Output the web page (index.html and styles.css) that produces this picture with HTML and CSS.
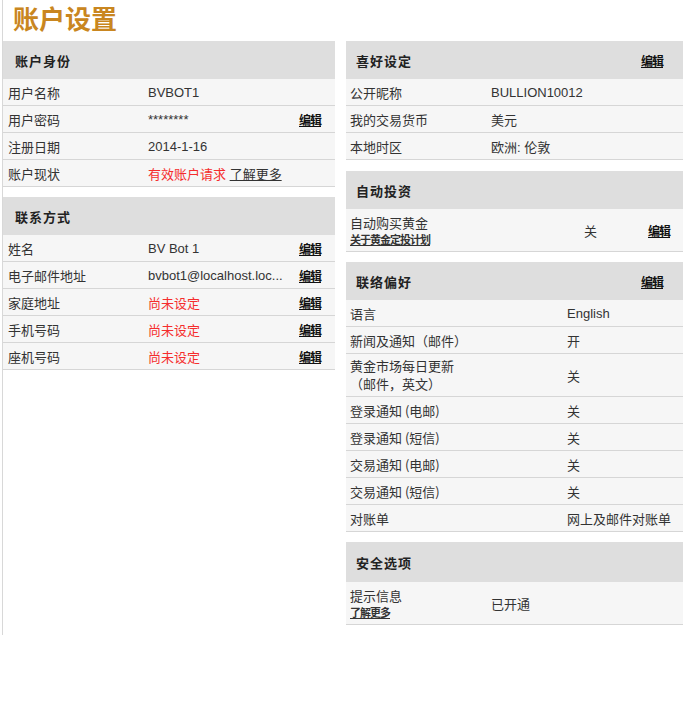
FILE: index.html
```html
<!DOCTYPE html>
<html lang="zh-CN">
<head>
    <meta charset="UTF-8">
    <title>账户设置</title>
    <link rel="stylesheet" href="styles.css">
</head>
<body>
    <div class="page">
        <h1 class="page-title">账户设置</h1>

        <div class="columns">
            <!-- left column -->
            <div class="col col-left">
                <div class="panel">
                    <div class="panel-head"><span>账户身份</span></div>
                    <div class="row">
                        <span class="label">用户名称</span>
                        <span class="value">BVBOT1</span>
                        <span class="edit"></span>
                    </div>
                    <div class="row">
                        <span class="label">用户密码</span>
                        <span class="value">********</span>
                        <a class="edit" href="#">编辑</a>
                    </div>
                    <div class="row">
                        <span class="label">注册日期</span>
                        <span class="value">2014-1-16</span>
                        <span class="edit"></span>
                    </div>
                    <div class="row">
                        <span class="label">账户现状</span>
                        <span class="value"><span class="red">有效账户请求</span> <a class="more" href="#">了解更多</a></span>
                        <span class="edit"></span>
                    </div>
                </div>

                <div class="panel">
                    <div class="panel-head"><span>联系方式</span></div>
                    <div class="row">
                        <span class="label">姓名</span>
                        <span class="value">BV Bot 1</span>
                        <a class="edit" href="#">编辑</a>
                    </div>
                    <div class="row">
                        <span class="label">电子邮件地址</span>
                        <span class="value" title="bvbot1@localhost.localdomain">bvbot1@localhost.loc...</span>
                        <a class="edit" href="#">编辑</a>
                    </div>
                    <div class="row">
                        <span class="label">家庭地址</span>
                        <span class="value red">尚未设定</span>
                        <a class="edit" href="#">编辑</a>
                    </div>
                    <div class="row">
                        <span class="label">手机号码</span>
                        <span class="value red">尚未设定</span>
                        <a class="edit" href="#">编辑</a>
                    </div>
                    <div class="row">
                        <span class="label">座机号码</span>
                        <span class="value red">尚未设定</span>
                        <a class="edit" href="#">编辑</a>
                    </div>
                </div>
            </div>

            <!-- right column -->
            <div class="col col-right">
                <div class="panel">
                    <div class="panel-head"><span>喜好设定</span><a class="edit" href="#">编辑</a></div>
                    <div class="row">
                        <span class="label">公开昵称</span>
                        <span class="value">BULLION10012</span>
                    </div>
                    <div class="row">
                        <span class="label">我的交易货币</span>
                        <span class="value">美元</span>
                    </div>
                    <div class="row">
                        <span class="label">本地时区</span>
                        <span class="value">欧洲: 伦敦</span>
                    </div>
                </div>

                <div class="panel">
                    <div class="panel-head"><span>自动投资</span></div>
                    <div class="row row-tall invest">
                        <span class="label">自动购买黄金<a class="small-link" href="#">关于黄金定投计划</a></span>
                        <span class="value">关</span>
                        <a class="edit" href="#">编辑</a>
                    </div>
                </div>

                <div class="panel prefs">
                    <div class="panel-head"><span>联络偏好</span><a class="edit" href="#">编辑</a></div>
                    <div class="row"><span class="label">语言</span><span class="value">English</span></div>
                    <div class="row"><span class="label">新闻及通知（邮件）</span><span class="value">开</span></div>
                    <div class="row row-tall"><span class="label">黄金市场每日更新<br>（邮件，英文）</span><span class="value">关</span></div>
                    <div class="row"><span class="label">登录通知 (电邮)</span><span class="value">关</span></div>
                    <div class="row"><span class="label">登录通知 (短信)</span><span class="value">关</span></div>
                    <div class="row"><span class="label">交易通知 (电邮)</span><span class="value">关</span></div>
                    <div class="row"><span class="label">交易通知 (短信)</span><span class="value">关</span></div>
                    <div class="row"><span class="label">对账单</span><span class="value">网上及邮件对账单</span></div>
                </div>

                <div class="panel">
                    <div class="panel-head tall-head"><span>安全选项</span></div>
                    <div class="row row-tall">
                        <span class="label">提示信息<a class="small-link" href="#">了解更多</a></span>
                        <span class="value">已开通</span>
                    </div>
                </div>
            </div>
        </div>
    </div>
</body>
</html>
```

FILE: styles.css
```css
body {
    margin: 0;
    background: #fff;
    color: #333;
    font-family: "Liberation Sans", Arial, "Noto Sans CJK SC", sans-serif;
    font-size: 13px;
}

a {
    color: #222;
}

.page {
    margin-left: 2px;
    width: 681px;
    border-left: 1px solid #d8d8d8;
    padding-bottom: 10px;
}

.page-title {
    margin: 0;
    height: 41px;
    padding-left: 10px;
    font-size: 26px;
    line-height: 36px;
    font-weight: bold;
    color: #c98620;
    font-family: "Noto Sans CJK SC", sans-serif;
}

.columns {
    display: flex;
    gap: 11px;
    align-items: flex-start;
}

.col-left {
    width: 332px;
}

.col-right {
    flex: 1;
}

.panel {
    margin-bottom: 10px;
}

.col-right .panel:first-child {
    margin-bottom: 11px;
}

.panel:last-child {
    margin-bottom: 0;
}

.panel-head {
    height: 38px;
    display: flex;
    align-items: center;
    justify-content: space-between;
    padding: 0 21px 0 10px;
    background: #dedede;
    font-family: "Noto Sans CJK SC", sans-serif;
    font-weight: bold;
    font-size: 13px;
    color: #222;
    letter-spacing: 1px;
}

.tall-head {
    height: 40px;
}

.col-left .panel-head {
    padding-left: 12px;
}

.row {
    display: grid;
    grid-template-columns: 145px 1fr 36px;
    align-items: center;
    height: 26px;
    background: #f6f6f6;
    border-bottom: 1px solid #d6d6d6;
}

.col-right .row {
    grid-template-columns: 145px 1fr;
}

.row-tall {
    height: 42px;
}

.label {
    padding-left: 5px;
    font-family: "Noto Sans CJK SC", sans-serif;
    color: #333;
    line-height: 15px;
}

.row-tall .label {
    line-height: 18px;
}

.col-right .label {
    padding-left: 4px;
}

.value {
    color: #333;
    white-space: nowrap;
}

.red {
    color: #f52d2d;
}

.more {
    color: #333;
}

.edit {
    font-family: "Noto Sans CJK SC", sans-serif;
    font-weight: bold;
    font-size: 12px;
    color: #111;
    letter-spacing: -1px;
}

.small-link {
    display: block;
    font-size: 11px;
    font-weight: bold;
    color: #333;
    letter-spacing: -1px;
    line-height: 15px;
}

.col-right .row.invest {
    grid-template-columns: 238px 1fr 36px;
}

.prefs .row {
    grid-template-columns: 221px 1fr;
}
```
